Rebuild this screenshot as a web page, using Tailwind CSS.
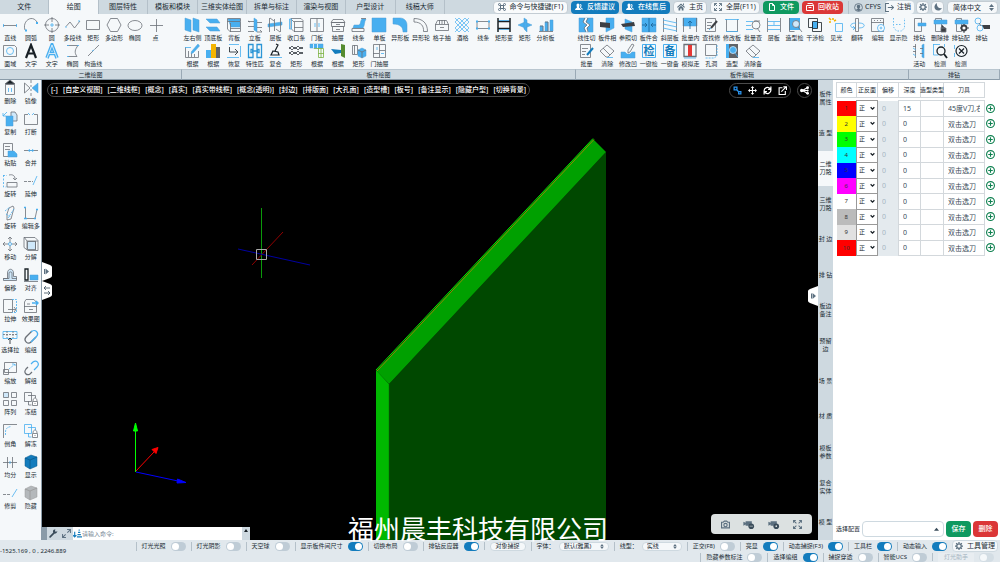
<!DOCTYPE html>
<html lang="zh-CN">
<head>
    <meta charset="UTF-8">
    <meta name="viewport" content="width=device-width, initial-scale=1.0">
    <title>板件绘图</title>
    <script src="https://cdn.jsdelivr.net/npm/@tailwindcss/browser@4"></script>
</head>
<body class="h-screen flex flex-col overflow-hidden bg-[#f5f8fa] font-['Noto_Sans','Noto_Sans_CJK_SC',sans-serif] text-[6px] leading-[8px] text-[#202b33]">

<!-- Tabs and top buttons -->
<header class="flex justify-between h-[14px] shrink-0 bg-[#ced9e0]">
    <nav id="tabs" class="grid grid-cols-9 w-[445px] text-[7px] leading-[14px]"></nav>
    <div class="flex items-center gap-[3px] pr-[2px] text-[7px] whitespace-nowrap">
        <button class="flex items-center justify-center gap-1 w-[75px] h-[13px] rounded-sm bg-[#f9fbfc] border border-[#c3ccd3]">
            <svg class="w-2 h-2 shrink-0" viewBox="0 0 16 16" fill="none" stroke="#5c7080" stroke-width="2"><path d="M5 5h6v6H5zM5 5H3.500A2 2 0 1 1 5 3zM11 5V3a2 2 0 1 1 2 2zM11 11h2a2 2 0 1 1-2 2zM5 11v2a2 2 0 1 1-2-2z"/></svg>
            命令与快捷键(F1)
        </button>
        <button class="flex items-center justify-center gap-1 w-12 h-[13px] rounded-sm bg-[#137cbd] text-white font-medium">
            <svg class="w-2 h-2 shrink-0" viewBox="0 0 16 16" fill="#fff"><path d="M6 1c2 0 3 1.500 3 3.500S8 8 8 9s4 1.500 4 5H0c0-3.500 4-4 4-5S3 6.500 3 4.500 4 1 6 1zM10 2c2 0 3 1 3 3s-1 3-1 4 4 1 4 4h-3c0-2.500-3-3.500-3-4.500s1-2 1-3.500-1-2-1-3z"/></svg>
            反馈建议
        </button>
        <button class="flex items-center justify-center gap-1 w-12 h-[13px] rounded-sm bg-[#137cbd] text-white font-medium">
            <svg class="w-2 h-2 shrink-0" viewBox="0 0 16 16" fill="#fff"><path d="M6 1c2 0 3 1.500 3 3.500S8 8 8 9s4 1.500 4 5H0c0-3.500 4-4 4-5S3 6.500 3 4.500 4 1 6 1zM10 2c2 0 3 1 3 3s-1 3-1 4 4 1 4 4h-3c0-2.500-3-3.500-3-4.500s1-2 1-3.500-1-2-1-3z"/></svg>
            在线售后
        </button>
        <button class="flex items-center justify-center gap-1 w-[34px] h-[13px] rounded-sm bg-[#f5f8fa] border border-[#c3ccd3]">
            <svg class="w-2 h-2 shrink-0" viewBox="0 0 16 16" fill="#5c7080"><path d="M8 1l8 7-1.500 1.500L8 4 1.500 9.500 0 8zM8 5.500L13 10v5h-3.500v-4h-3v4H3v-5zM12 1h2v4l-2-2z"/></svg>
            主页
        </button>
        <button class="flex items-center justify-center gap-1 w-[50px] h-[13px] rounded-sm bg-[#f5f8fa] border border-[#c3ccd3]">
            <svg class="w-2 h-2 shrink-0" viewBox="0 0 16 16" fill="none" stroke="#5c7080" stroke-width="1.800"><path d="M1 6V1h5M10 1h5v5M15 10v5h-5M6 15H1v-5M1 1l5 5M15 1l-5 5M15 15l-5-5M1 15l5-5"/></svg>
            全屏(F11)
        </button>
        <div class="flex gap-[3px]">
            <button class="flex items-center justify-center gap-1 w-[36px] h-[13px] rounded-sm bg-[#0f9960] text-white font-medium">
                <svg class="w-2 h-2 shrink-0" viewBox="0 0 16 16" fill="none" stroke="#fff" stroke-width="2"><path d="M3 1h6l4 4v10H3zM9 1v4h4"/></svg>
                文件
            </button>
            <button class="flex items-center justify-center gap-1 w-[41px] h-[13px] rounded-sm bg-[#db3737] text-white font-medium">
                <svg class="w-2 h-2 shrink-0" viewBox="0 0 16 16" fill="none" stroke="#fff" stroke-width="2"><path d="M1 5h14v10H1zM3 1h10l2 4M5 9h6"/></svg>
                回收站
            </button>
        </div>
        <div class="flex items-center gap-[2px] border-l border-[#b4c0c9] ml-[2px] pl-[5px]">
            <a href="#user" class="flex items-center gap-[2px] h-[13px] w-[29px]">
                <svg class="w-[9px] h-[9px] shrink-0" viewBox="0 0 16 16" fill="none" stroke="#5c7080" stroke-width="1.500"><circle cx="8" cy="8" r="7"/><path fill="#5c7080" stroke="none" d="M8 3c2 0 3 1.200 3 3S9.500 9 9.500 10s3 .8 3 2.500C11 14.500 5 14.500 3.500 12.500c0-1.700 3-1.500 3-2.500S5 8 5 6s1-3 3-3z"/></svg>
                CFYS
            </a>
            <button class="flex items-center gap-[3px] h-[13px] w-[29px] bg-[#f5f8fa] rounded-sm">
                <svg class="w-[9px] h-[9px]" viewBox="0 0 16 16" fill="none" stroke="#5c7080" stroke-width="1.800"><path d="M7 1H1v14h6M5 8h10M11 4l4 4-4 4"/></svg>
                注销
            </button>
            <button aria-label="设置" class="flex items-center justify-center w-[13px] h-[13px] rounded-sm bg-[#f5f8fa] border border-[#c3ccd3]">
                <svg class="w-2 h-2 shrink-0" viewBox="0 0 16 16" fill="none" stroke="#5c7080"><circle cx="8" cy="8" r="4.500" stroke-width="2.500"/><path stroke-width="2.500" d="M8 0v3M8 13v3M0 8h3M13 8h3M2.300 2.300l2 2M11.700 11.700l2 2M2.300 13.700l2-2M11.700 4.300l2-2"/></svg>
            </button>
            <button aria-label="深色模式" class="flex items-center justify-center w-[13px] h-[13px] rounded-sm bg-[#f5f8fa] border border-[#c3ccd3]">
                <svg class="w-2 h-2 shrink-0" viewBox="0 0 16 16" fill="#5c7080"><path d="M6 0C1 3-1 9 3 13s11 2 13-3C11 12 4 7 6 0z"/></svg>
            </button>
        </div>
        <label class="relative">
            <select aria-label="语言" class="appearance-none block w-[51px] h-[13px] pl-[5px] rounded-sm bg-[#f5f8fa] border border-[#c3ccd3] text-[7px] leading-[11px]"><option>简体中文</option></select>
            <svg class="absolute right-[4px] top-[3px] w-[5px] h-[7px]" viewBox="0 0 10 14" fill="#5c7080"><path d="M5 0l5 6H0zM5 14L0 8h10z"/></svg>
        </label>
    </div>
</header>

<!-- Ribbon -->
<section id="ribbon" class="flex shrink-0 h-[66px]"></section>

<main class="flex flex-1 min-h-0">
    <!-- Modify tools -->
    <aside class="w-[42px] shrink-0 border-r border-[#8a9ba8]">
        <div id="modify" class="grid grid-cols-2 auto-rows-fr h-[436px]"></div>
    </aside>

    <!-- Drawing area -->
    <section class="relative flex-1 min-w-0 bg-black">
        <svg class="block w-full h-full" viewBox="42 80 776 460" preserveAspectRatio="xMidYMax slice">
            <path fill="#004800" d="M389 384L606 152V540H389z"/>
            <path fill="#00a000" d="M376 371L593 139l13 13L389 384z"/>
            <path fill="#00b800" d="M376 370l13 14v156h-13z"/>
            <path stroke="#00e000" d="M376 370L593 138.500"/>
            <path stroke="#8c8c00" d="M377 371L594 139.500"/>
            <path stroke="#007000" d="M376 370l13 14v156" fill="none" stroke-width=".5"/>
            <!-- cursor -->
            <path stroke="#0a9a0a" d="M261.500 208v70"/>
            <path stroke="#900000" d="M252 265l31-33"/>
            <path stroke="#0000a0" d="M238 249l72 16"/>
            <path stroke="#aaa" fill="none" d="M256.500 249.500h10v10h-10z"/>
            <!-- axes -->
            <path stroke="#0f0" fill="#0f0" d="M135.500 472v-42M135.500 423l-2 8h4z"/>
            <path stroke="red" fill="red" d="M136 471l18-19M158 447.500l-6 2 4 4z"/>
            <path stroke="#00f" fill="#00f" d="M136 472l42 9M186 482.500l-8.500-3.500-.5 4z"/>
        </svg>

        <div id="views" class="absolute left-[5px] top-[3px] flex justify-between items-center w-[483px] h-[14px] px-[3px] rounded-full border border-[#4a4a4a] text-[7px] font-medium text-white whitespace-nowrap"></div>

        <div class="absolute right-[27px] top-[3px] flex justify-around items-center w-[62px] h-[15px] rounded-full border border-[#4a4a4a]">
            <button aria-label="选择"><svg class="w-[9px] h-[9px]" viewBox="0 0 16 16" fill="none" stroke="#2b95f0" stroke-width="2.200"><path d="M2 2h5v5H2zM7 7l4 4M10 10h4v4h-4z"/></svg></button>
            <button aria-label="平移"><svg class="w-[9px] h-[9px]" viewBox="0 0 16 16" fill="#fff"><path d="M8 0l3 3.500H9V7h3.500V5L16 8l-3.500 3V9H9v3.500h2L8 16l-3-3.500h2V9H3.500v2L0 8l3.500-3v2H7V3.500H5z"/></svg></button>
            <button aria-label="旋转"><svg class="w-[9px] h-[9px]" viewBox="0 0 16 16" fill="none" stroke="#fff" stroke-width="2.200"><path d="M2 9c-.5-6 7-9 11-4M14 7c.5 6-7 9-11 4M14 1v5H9M2 15v-5h5"/></svg></button>
            <button aria-label="弹出"><svg class="w-[9px] h-[9px]" viewBox="0 0 16 16" fill="none" stroke="#fff" stroke-width="2"><path d="M8 3H2v12h11V9M6 10l8-8M9.500 1.500H15V7"/></svg></button>
        </div>
        <button aria-label="分享" class="absolute right-[6px] top-[3px] flex justify-center items-center w-[15px] h-[15px] rounded-full border border-[#4a4a4a]">
            <svg class="w-[9px] h-[9px]" viewBox="0 0 16 16" fill="#fff"><path stroke="#fff" stroke-width="2" fill="none" d="M13 3L4 8l9 5M4 8h9"/><circle cx="3" cy="8" r="3"/><circle cx="13.500" cy="3" r="2.500"/><circle cx="13.500" cy="8" r="2"/><circle cx="13.500" cy="13" r="2.500"/></svg>
        </button>

        <!-- Side handles -->
        <div class="absolute left-0 top-[182px]">
            <button aria-label="展开" class="block w-[10px] h-[19px]"><svg class="w-full h-full" viewBox="0 0 10 19"><path fill="#fff" d="M0 0l8 3q2 1 2 2v9q0 1-2 2l-8 3z"/><path fill="#5c7080" d="M2 7h1v5H2zM3.500 6.500L7 9.500l-3.500 3z"/></svg></button>
            <button aria-label="切换" class="block w-[10px] h-[19px]"><svg class="w-full h-full" viewBox="0 0 10 19"><path fill="#fff" d="M0 0l8 3q2 1 2 2v9q0 1-2 2l-8 3z"/><path fill="none" stroke="#394b59" stroke-width=".8" d="M2 7h6M4 5L2 7l2 2M2 12h6M6 10l2 2-2 2"/></svg></button>
        </div>
        <button aria-label="收起" class="absolute right-0 top-[206px] w-[10px] h-[20px]"><svg class="w-full h-full" viewBox="0 0 10 20"><path fill="#fff" d="M10 0L2 3Q0 4 0 5v10q0 1 2 2l8 3z"/><path fill="#5c7080" d="M3 7.500h1v5H3zM4.500 7L8 10l-3.500 3z"/></svg></button>

        <!-- Command line -->
        <div class="absolute left-0 bottom-0 flex w-[208px] h-[13px] bg-white">
            <div class="w-[5px] bg-[#8a9ba8]"></div>
            <div class="flex justify-around items-center w-[26px] bg-[#ced9e0]">
                <button aria-label="命令设置"><svg class="w-[9px] h-[9px]" viewBox="0 0 16 16"><path d="M2 14l7-7" stroke="#394b59" stroke-width="3" stroke-linecap="round"/><path fill="#394b59" d="M15 4l-3 1-1.500-1.500L11.500 1C8 0 6 3 7.500 6s6 3 7.500-2z"/></svg></button>
                <button aria-label="放大"><svg class="w-[9px] h-[9px]" viewBox="0 0 16 16" fill="none" stroke="#5c7080" stroke-width="1.800"><path d="M9 1h6v6M15 1L9.500 6.500M7 15H1V9M1 15l5.500-5.500"/></svg></button>
            </div>
            <svg class="w-[9px] h-[9px] mt-[2px]" viewBox="0 0 16 16" fill="none" stroke="#137cbd" stroke-width="2"><path d="M3 5v9M0 11l3 3 3-3M10 2h2M9 6h4M8 10h6M7 14h9"/></svg>
            <input type="text" aria-label="命令" placeholder="请输入命令:" class="flex-1 min-w-0 text-[6px] placeholder:text-[#738694] outline-none">
            <div class="w-2 bg-[#ced9e0]"><svg class="w-2 h-2" viewBox="0 0 8 8" fill="#182026"><path d="M4 2l2 3H2z"/></svg></div>
        </div>

        <p class="absolute left-[306px] bottom-[-2px] z-10 text-[26px] leading-[26px] text-white whitespace-nowrap">福州晨丰科技有限公司</p>

        <div class="absolute right-[6px] bottom-[6px] flex justify-around items-center w-[101px] h-5 px-[3px] rounded-sm bg-[#dce1e1]">
            <button aria-label="截图"><svg class="w-[9px] h-[9px]" viewBox="0 0 16 16" fill="none" stroke="#5c7080" stroke-width="2"><path d="M1 4h3l2-2h4l2 2h3v10H1z"/><circle cx="8" cy="9" r="3"/></svg></button>
            <button aria-label="录像"><svg class="w-3 h-[9px]" viewBox="0 0 20 16" fill="#5c7080"><path d="M0 3l4 2V2h11v8H4V8l-4 2z"/><circle cx="14" cy="11" r="5" fill="#394b59"/><path stroke="#dce1e1" d="M11 11h6"/></svg></button>
            <button aria-label="录像设置"><svg class="w-3 h-[9px]" viewBox="0 0 20 16" fill="#5c7080"><path d="M0 3l4 2V2h11v8H4V8l-4 2z"/><circle cx="14" cy="11" r="5" fill="#394b59"/><circle cx="14" cy="11" r="1.500" fill="#dce1e1"/></svg></button>
            <button aria-label="全屏视图"><svg class="w-[9px] h-[9px]" viewBox="0 0 16 16" fill="none" stroke="#5c7080" stroke-width="1.800"><path d="M1 5V1h4M11 1h4v4M15 11v4h-4M5 15H1v-4M1 1l5 5M15 1l-5 5M15 15l-5-5M1 15l5-5"/></svg></button>
        </div>
    </section>

    <nav id="sideTabs" class="flex flex-col w-[15px] shrink-0 bg-[#ced9e0]"></nav>

    <!-- Tool path panel -->
    <section class="flex flex-col justify-between w-[167px] shrink-0 pl-[3px] pt-[2px] pb-[3px] pr-[2px] bg-white">
        <table class="w-[158px] h-[174px] table-fixed border-collapse">
            <thead>
            <tr class="h-[15px]">
                <th class="w-5 border border-[#d3d8dc] font-normal">颜色</th>
                <th class="w-[21px] border border-[#d3d8dc] font-normal whitespace-nowrap">正反面</th>
                <th class="w-[21px] border border-[#d3d8dc] font-normal">偏移</th>
                <th class="w-[22px] border border-[#d3d8dc] font-normal">深度</th>
                <th class="w-[23px] border border-[#d3d8dc] font-normal whitespace-nowrap"><span class="flex justify-center">造型类型</span></th>
                <th class="w-[41px] border border-[#d3d8dc] font-normal">刀具</th>
                <td></td>
            </tr>
            <tr class="h-[3px]"><td colspan="7"></td></tr>
            </thead>
            <tbody id="paths"></tbody>
        </table>
        <div class="flex items-center gap-[2px] h-4">
            <label for="config" class="w-6 whitespace-nowrap">选择配置</label>
            <div class="relative flex-1">
                <select id="config" class="appearance-none block w-full h-4 rounded-sm border border-[#ced9e0] bg-white"><option></option></select>
                <svg class="absolute right-[5px] top-[6px] w-[5px] h-[5px]" viewBox="0 0 8 8" fill="#394b59"><path d="M4 1l4 5H0z"/></svg>
            </div>
            <button class="w-[25px] h-4 rounded-sm bg-[#0f9960] text-white text-[7px] font-medium">保存</button>
            <button class="w-[25px] h-4 rounded-sm bg-[#db3737] text-white text-[7px] font-medium">删除</button>
        </div>
    </section>
</main>

<!-- Status bar -->
<footer class="flex justify-between items-center h-[22px] shrink-0 bg-[#e1e8ed] pr-[2px] whitespace-nowrap">
    <span class="text-[6px]">-1525.169 , 0 , 2246.889</span>
    <div class="flex flex-col items-end">
        <div class="flex items-center gap-[5px] h-[12px]">
            <div id="statusA" class="contents"></div>
            <button class="w-9 h-[9px] rounded-sm bg-[#f5f8fa] border border-[#ced9e0] leading-[7px]">对象捕捉</button>
            <div class="flex items-center gap-1 border-l border-[#b4c0c9] pl-[5px]">
                <label for="font">字体：</label>
                <div class="relative">
                    <select id="font" class="appearance-none block w-[50px] h-[9px] pl-1 rounded-sm bg-[#f5f8fa] border border-[#ced9e0] leading-[7px]"><option>默认(雅黑)</option></select>
                    <svg class="absolute right-[5px] top-[2px] w-1 h-[5px]" viewBox="0 0 10 14" fill="#5c7080"><path d="M5 0l5 6H0zM5 14L0 8h10z"/></svg>
                </div>
            </div>
            <div class="flex items-center gap-1 border-l border-[#b4c0c9] pl-[5px]">
                <label for="lineType">线型：</label>
                <div class="relative">
                    <select id="lineType" class="appearance-none block w-10 h-[9px] pl-1 rounded-sm bg-[#f5f8fa] border border-[#ced9e0] leading-[7px]"><option>实线</option></select>
                    <svg class="absolute right-[5px] top-[2px] w-1 h-[5px]" viewBox="0 0 10 14" fill="#5c7080"><path d="M5 0l5 6H0zM5 14L0 8h10z"/></svg>
                </div>
            </div>
            <div id="statusB" class="contents"></div>
            <button class="flex items-center justify-center gap-1 w-[46px] h-[12px] rounded-sm bg-[#f5f8fa] border border-[#ced9e0] text-[7px]">
                <svg class="w-2 h-2 shrink-0" viewBox="0 0 16 16" fill="none" stroke="#5c7080"><circle cx="8" cy="8" r="4.500" stroke-width="2.500"/><path stroke-width="2.500" d="M8 0v3M8 13v3M0 8h3M13 8h3M2.300 2.300l2 2M11.700 11.700l2 2M2.300 13.700l2-2M11.700 4.300l2-2"/></svg>
                工具管理
            </button>
        </div>
        <div class="flex items-center gap-[5px] h-[10px] pr-[4px]">
            <div id="statusC" class="contents"></div>
            <label for="lightHelper" class="w-9 h-[9px] text-center bg-[#e8edf1] text-[#a7b6c2]">灯光助手</label>
            <input type="checkbox" id="lightHelper" disabled class="appearance-none w-[15px] h-[9px] rounded-full bg-[#d3dde4] before:content-[''] before:block before:w-[7px] before:h-[7px] before:m-px before:rounded-full before:bg-[#f5f8fa]">
        </div>
    </div>
</footer>

<script>
    // stroke / fill shorthands used in the icon set, drawn on a 16x16 grid
    const B = 'stroke="#48aff0"';
    const F = 'fill="#48aff0" stroke="#4f9fd4" stroke-width=".5"';
    const K = 'stroke="#182026"';
    const L = 'fill="#cfe8fa"';
    const G = 'fill="#5f6368" stroke="none"';

    const icons = {
        line: `<path d="M1 8.500h14"/><path ${B} d="M1.500 7v3M14.500 7v3"/>`,
        arc: `<path d="M2 13C-1 4 9-3 14 5"/><path ${B} stroke-width="2" d="M2 13.500h2M14 5v2"/>`,
        circle: `<circle cx="8" cy="8" r="6.500"/><path d="M8 0v5M8 11v5M0 8h5M11 8h5"/><path ${B} d="M8 6v4M6 8h4"/>`,
        pline: `<path d="M1 9.500L5 5l4.500 6L15 4"/><path ${B} d="M1 9v2M14 3v2"/>`,
        rect: `<path d="M1.500 3.500h13v9h-13z"/>`,
        polygon: `<path d="M4.500 1.500h7l3.500 6.500-3.500 6.500h-7L1 8z"/>`,
        ellipse: `<ellipse cx="8" cy="8.500" rx="7" ry="5"/>`,
        point: `<path d="M8.500 2v13M2 8.500h13"/>`,
        region: `<path d="M1.500 2.500h11l2 2v9h-13z"/><circle ${B} cx="8" cy="8" r="3.500"/>`,
        text: `<path stroke="#182026" stroke-width="2.200" d="M3 15L8 2l5 13M5 10.500h6"/>`,
        mtext: `<path ${B} stroke-width="3.500" d="M3 15L8 2l5 13M5 10.500h6"/><path stroke="#f5f8fa" d="M3 15L8 2l5 13M5 10.500h6"/>`,
        spline: `<path d="M2 2.500h11c-3 4-4 7-1 11H3"/><path ${B} d="M2 2.500h2M2 13.500h2M12 2.500h2"/>`,
        xline: `<path stroke-dasharray="8 1" d="M3 13L14 2"/><path ${B} d="M7 8l2-1"/>`,
        sides: `<path ${F} d="M1 1l6 2v12l-6-2zM9 1l6 2v12l-6-2z"/>`,
        topbot: `<path ${F} d="M1 2h11l3 4H5zM1 10h11l3 4H5z"/>`,
        back: `<path ${F} d="M2 2h12v8H5z"/><path d="M1.500 1.500h13v3h-13zM1.500 4v8l3 3V6M4 14.500h10.500V5M4 11.500h10"/>`,
        vert: `<path ${F} d="M7 1l3 2v12l-3-2z"/><path d="M1 4.500h6M10 5.500h5M1 9.500h6M10 10.500h5M1 14.500h6M1 4l2 1M10 15h5l-2-2"/>`,
        shelf: `<path ${F} d="M1 7l14-2v3L1 10z"/><path d="M2.500 1v14M7.500 2v12M13.500 1v14M3 1l4 3M9 12l4 3"/>`,
        filler: `<path d="M3 1.500h10l2 2v11H6l-3-3zM6 4.500h9M6.500 5v10M3 2l3 3M6 10.500h9"/><path ${B} d="M1.500 2h2v10h-2z"/>`,
        door: `<path d="M1.500 1.500h13v13h-13zM8 1.500v13"/><path ${B} d="M6 6v4M10 6v4"/>`,
        drawer: `<path d="M3 2.500h10l2 3H1zM1.500 5.500h13v4h-13zM2.500 9.500h11v5h-11zM6 7.500h4M6 12.500h4"/>`,
        strip: `<path ${F} d="M11 2h4c-2 3-1 6-3 9H2l1-3h5c2-1 1-4 3-6z"/><path d="M1 11.500h12v3H1zM10 1.500h5"/>`,
        board: `<path ${F} d="M1 1h14v14H1z"/>`,
        shaped: `<path ${F} d="M1 1h7c4 0 7 3 7 7v7h-4c0-5-3-8-10-8z"/>`,
        outline: `<path d="M1 1.500c9 0 13.500 5 13.500 13h-4C11 9 8 5 1 5z"/>`,
        grid: `<path d="M1.500 7.500l2-4h9l2 4v6h-13zM1 7.500h14M5.500 3v4M8 3v4M10.500 3v4M6 10.500h4"/>`,
        wine: `<path ${B} stroke-width=".7" d="M1 5l4-4 10 10-4 4L1 5M1 11L11 1l4 4L5 15l-4-4M1 1l14 14M15 1L1 15"/>`,
        strip2: `<path d="M2 4.500h12v7H2z"/><path ${B} stroke-width="2" d="M1 4.500h2M13 4.500h2M1 11.500h2M13 11.500h2"/>`,
        rectvar: `<path ${K} stroke-width="1.500" d="M2 1v14M14 1v14M2 4.500h12M2 11.500h12"/><path ${B} d="M3 3.500h10M3 12.500h10"/>`,
        cross3d: `<path ${F} d="M7 1l3 2v12l-3-3zM1 8l7-3 7 3-7 3z"/>`,
        chart: `<path ${F} d="M2 9h3v5H2zM7 5h3v9H7zM12 3h3v11h-3z"/><path d="M1 14.500h14M2 9h3v5M7 5h3v9"/>`,
        edit: `<path d="M1.500 4v10.500h13V8M4.500 8v6M7.500 10v4M10.500 11v3"/><path ${F} d="M14 1l1.500 2L9 10l-2 .5.500-2z"/><path ${B} d="M1 4.500h6"/>`,
        books: `<path fill="#48aff0" stroke="none" d="M1 7h5v8H1z"/><path fill="#f4b400" stroke="none" d="M6 1h5v14H6z"/><path ${G} d="M11 4h4v11h-4z"/>`,
        restore: `<path ${B} d="M3 1.500h10M1 14.500h12M14.500 3v11"/><path ${K} d="M3.500 4v5H11M9 6l3 3-3 3"/>`,
        match: `<path stroke="#2b95d6" stroke-width="1.300" d="M1.500 1.500H6v5H4v3h2v5H1.500zM14.500 1.500H10v5h2v3h-2v5h4.500zM5 8h6"/>`,
        clamp: `<path ${K} stroke-width="1.200" d="M9 1l2 1-3 6M6 8l5 1 1 3H4z"/><path ${B} d="M2 14.500h13"/>`,
        mesh: `<path ${K} stroke-width=".7" d="M1 6l3-3 3 3 3-3 3 3 2-2M1 4l3 3 3-3 3 3 3-3 2 2M1 11l3-3 3 3 3-3 3 3 2-2M1 9l3 3 3-3 3 3 3-3 2 2"/>`,
        cabin: `<path ${F} d="M1 1h13v4H1z"/><path stroke="#fff" d="M4.500 1v4M8.500 1v4"/><path stroke="#7cb342" d="M5 5.500h9.500v9h-5V5M9 10.500h6M12 5v10"/>`,
        cabin2: `<path fill="#558b2f" stroke="none" d="M11 1l4 1v13l-4-2z"/><path fill="#137cbd" stroke="none" d="M1 6l10 1v3l-6 1z"/>`,
        box: `<path d="M1.500 2.500h5v9h-5zM3.500 2v9"/><path ${F} d="M7 7l4-2 4 2v6l-4 2-4-2z"/><path d="M7 7l4 2 4-2M11 9v6"/>`,
        doordr: `<path d="M2.500 1.500h12v13h-12zM8.500 1.500v13M8 7.500h6M2 10.500h6"/><path ${B} d="M6 4v3M10 10.500h3"/>`,
        cut: `<path ${F} d="M1 1h14v14H1z"/><path stroke="#fff" stroke-width="2" d="M8.500 1l-2 4 4 3-3 3 2 4"/><path d="M7 1L5 5l4 3-3 3 2 4M10 1L8 5l4 3-3 3 1 4"/>`,
        cutA: `<path ${F} d="M7 1h8v10l-8 4z"/><path fill="#3c3f44" stroke="none" d="M1 5l10 1v5L1 10z"/>`,
        cutB: `<path ${F} d="M5 2l7 3v10l-7-3z"/><path fill="#3c3f44" stroke="none" d="M1 7l13-2 1 4-12 1z"/>`,
        merge: `<path ${F} d="M1 1h14v14H1z"/><path stroke="#1a5f92" d="M8 1v14M1 8h5M15 8h-5M4 6l2 2-2 2M12 6l-2 2 2 2"/>`,
        slope: `<path d="M1.500 1v14M14.500 1v14"/><path ${B} d="M1 3l14 3M1 7l14 3M1 11l14 3"/>`,
        batch: `<path ${F} d="M1 1h14v8H1z"/><path d="M1.500 1v14M14.500 1v14"/><path stroke="#1a5f92" d="M8 12V4M6 6l2-2 2 2"/>`,
        find: `<path d="M2.500 1.500h10v13h-10zM4 5.500h5M4 8.500h4M4 11.500h3"/><path stroke="#3c3f44" stroke-width="2" d="M14 4l-6 7"/><path ${B} d="M6 13l2-2"/>`,
        modify: `<path d="M2.500 2v12.500h11V2"/><path ${B} d="M1 2.500h14M2 14.500h12"/>`,
        query: `<path ${B} d="M1 4.500h7M1 8.500h5M1 12.500h7"/><circle cx="11" cy="8" r="4"/><path d="M12 11l3 4M9 4h6"/>`,
        layer: `<path d="M1.500 1v14M14.500 1v14"/><path ${B} d="M2 4.500h12M2 8.500h12M2 12.500h12M8 5v3"/>`,
        inspect: `<path fill="#48aff0" stroke="none" d="M2 1h11v12H2z"/><path d="M2.500 1v13.500h5"/><circle fill="#cfe8fa" cx="9" cy="7" r="3.500"/><path d="M11 10l4 5"/>`,
        clash: `<path ${K} d="M1.500 1.500h9v9h-9zM5.500 5.500h9v9h-9z"/><path fill="#48aff0" ${K} d="M5.500 4.500h5v7h-5z"/>`,
        light: `<path ${B} d="M7.500 6.500h7v8h-7z"/><path stroke="#f4b400" stroke-width="1.600" d="M1 1l2 2M5 1v2M1 5h2M8 3L6 4"/>`,
        flip: `<path d="M6.500 1.500h3v13h-3z"/><path ${B} d="M7 6C0 6 0 11 6 11M10 6c7 0 7 5 0 5M4 9l2 2-2 2"/>`,
        code: `<path d="M1.500 1.500h12v13h-12zM1 5.500h13M4 3.500h1M7 3.500h1M10 3.500h1"/><circle ${B} fill="#fff" cx="11" cy="11" r="3.500"/><circle ${B} cx="11" cy="11" r="1"/>`,
        hide: `<path ${B} stroke-dasharray="1.500 1.500" d="M2.500 1v9l3 4h5l3-3V1M5 7.500h6"/>`,
        note: `<path d="M2.500 1.500h10v13h-10zM4 5.500h6M4 8.500h4M4 11.500h3"/><path stroke="#137cbd" stroke-width="2" d="M15 5l-6 7"/>`,
        eraser: `<path d="M8 2l7 6-6 6H7L1 8zM4 5l7 7"/><path ${B} d="M8 14.500h6"/>`,
        groove: `<path ${F} d="M1 9h4l2 2h3l2-2h3v6H1z"/><path d="M12 1l2 1-4 7-2 1V7z"/>`,
        check: `<path ${B} stroke-width="1" d="M1.500 1.500h13v13h-13z"/><text x="8" y="12" font-size="11" font-weight="700" text-anchor="middle" fill="#137cbd" stroke="none">检</text>`,
        backup: `<path ${B} stroke-width="1" d="M1.500 1.500h13v13h-13z"/><text x="8" y="12" font-size="11" font-weight="700" text-anchor="middle" fill="#137cbd" stroke="none">备</text>`,
        simulate: `<path stroke-width="1.300" d="M2 1.500h12v12H2z"/><path fill="#e53935" stroke="none" d="M6 2h4v11H6z"/><path ${B} d="M2 15h12"/>`,
        hole: `<path d="M2.500 1.500h11v11h-11z"/><path ${B} stroke-dasharray="2 1" d="M14 2v11l-3 2H2"/>`,
        model: `<path ${G} d="M2 1h12v14H2z"/><path fill="#48aff0" stroke="none" d="M2 1h3v14H2z"/><circle fill="#48aff0" stroke="#cfe8fa" cx="9" cy="7" r="3.500"/><path ${B} d="M11 10l3 4"/>`,
        drill: `<path d="M3.500 1.500h7v13h-7z"/><path ${F} d="M7 6h8v3H7z"/>`,
        drilldel: `<path d="M3.500 1.500h6v13h-6z"/><path ${F} d="M2 3h13v4H2z"/><path fill="#3c3f44" d="M10 8l3 3H9zM9 11h5v4H9z"/>`,
        drillcfg: `<path d="M3.500 1.500h5v13h-5z"/><path ${F} d="M2 3h13v4H2z"/><circle fill="#fff" stroke="#3c3f44" stroke-width="1.800" cx="11" cy="11" r="2.500"/><path ${K} d="M11 7v1M11 14v2M7 11h1M14 11h2"/>`,
        drillrow: `<circle ${B} cx="4" cy="4" r="3"/><circle ${B} cx="6" cy="11" r="3"/><path fill="#3c3f44" stroke="none" d="M8 8h8v4h-6z"/><path d="M5 6l2 3"/>`,
        hinge: `<path d="M4.500 1v14M2 3.500h3M2 8.500h3"/><path ${B} d="M2 5l3 2M2 11l3 2"/><path ${F} d="M11 2l2-1v14l-2-1z"/><path d="M9 5.500h3M9 10.500h3"/>`,
        detect: `<path ${B} d="M1 1.500h7M1.500 1v11h5M12.500 1v3"/><circle ${K} stroke-width="1.300" cx="9" cy="8" r="4"/><path ${K} stroke-width="1.800" d="M12 11l3 4"/>`,
        detectx: `<circle ${K} stroke-width="1.200" cx="8.500" cy="8" r="5.500"/><path ${K} stroke-width="1.200" d="M6 5.500l5 5M11 5.500l-5 5"/><path ${B} d="M1.500 2v4M1.500 10v4"/>`,
        trash: `<path fill="#182026" d="M8 0l5 4H3z"/><path d="M3.500 4.500v10h9v-10z"/><path ${B} d="M6.500 8v4M9.500 8v4"/>`,
        mirror: `<path d="M1.500 3v10L7 8zM8 0v3M8 5v2M8 9v2M8 13v3"/><path ${F} d="M15 3v10L9 8z"/>`,
        copy: `<path ${L} d="M9 1h4l2 3v6H9z"/><path ${F} d="M4 5h7v10H4z"/><path ${B} d="M1 5l4-4M1 2v3h3"/>`,
        brk: `<path d="M5 3.500H1.500v10h13v-10H11"/><path ${B} d="M5 2l2 2M11 2L9 4"/>`,
        paste: `<path d="M1.500 1.500h9v13h-9zM3 4.500h5M3 7.500h5"/><path ${F} d="M6 9h6l3 3v3H6z"/>`,
        join: `<path d="M1 8.500h14"/><path ${B} d="M5 8.500h6M6 7l1 1.500L6 10M10 7L9 8.500l1 1.500"/>`,
        rotate: `<path d="M5 9.500h10v4.500H5zM7 2c4-1 6 1 6 4M11 5l2 2 2-2"/><path ${B} stroke-dasharray="2 1.500" d="M1.500 2v12h3M1 2.500h4"/>`,
        extend: `<path stroke-dasharray="3 1" d="M1 8.500h9"/><path ${B} d="M10 12l4-9"/>`,
        rotate3: `<path d="M7 3l4-2 1 2-3 11-4 1V9z"/><path ${B} stroke-dasharray="2 1" d="M3 6l5-4M6 13l6-9M4 9l5 3"/>`,
        editpl: `<path d="M2.500 2v11.500H12l2-9"/><path ${B} stroke-width="1.500" d="M1 2.500h2M1 13.500h3M11 13.500h2M13 4.500h2"/>`,
        move: `<path d="M8 1v14M1 8h14M6 3l2-2 2 2M6 13l2 2 2-2M3 6L1 8l2 2M13 6l2 2-2 2"/><circle fill="#f5f8fa" ${B} cx="8" cy="8" r="1.500"/>`,
        explode: `<path ${L} d="M4.500 5.500h8v8h-8z"/><path d="M1 1.500h11l3 3v10H5l-4-3zM1 1l3 4v9M4 5h11M12.500 5v9"/>`,
        offset: `<path ${L} d="M1.500 11.500h4V6c0-5 6-5 6 0v3.500h3v4h-13z"/><path d="M1 11.500h6V6c0-1.500 3-1.500 3 0v5.500h5"/>`,
        align: `<path ${K} stroke-width="1.300" d="M2 2h3v11H2z"/><path ${F} d="M7 8h8v5H7z"/><path d="M1 14.500h14"/>`,
        stretch: `<path d="M1.500 1.500h9v13h-9zM6 11.500h8M12 9l2 2.500-2 2.500"/><path ${B} stroke-dasharray="2 1" d="M10 1.500h4.500v13H10"/>`,
        render: `<path d="M3 1.500h8l2.500 3v10h-12V4zM1 8.500h13M4 6h3M6 11.500h4"/><path ${B} stroke-width="1.500" d="M9 5h6M13 3l2 2-2 2"/>`,
        selstretch: `<path ${B} d="M1 2.500h14v7H1z"/><path stroke-dasharray="2 1" d="M1 5.500h14M5 2v7M11 2v7"/><path ${K} d="M8 15V9M6 11l2-2 2 2"/>`,
        group: `<path stroke-width="1.300" d="M9 2l-6 6c-3 4 2 8 5 5l5-5"/><path ${B} stroke-width="1.300" d="M8 3c4-4 9 1 5 5l-5 5"/>`,
        scale: `<path d="M2.500 2.500h12v10h-12zM1.500 9.500h5v5h-5z"/><path ${B} stroke-dasharray="2 1" d="M7 9l6-5M10 4h3v3"/>`,
        ungroup: `<path stroke-width="1.200" d="M5 7l-2 2c-3 4 1 7 4 5l2-2"/><path ${B} stroke-width="1.200" d="M8 4l2-2c4-3 7 2 4 5l-3 3"/>`,
        array: `<path ${L} d="M1.500 1.500h5v5h-5z"/><path d="M9.500 1.500h5v5h-5zM1.500 9.500h5v5h-5zM9.500 9.500h5v5h-5z"/>`,
        freeze: `<path d="M1.500 1.500h7v9h-7zM5 4.500h7.500v4M5.500 10v4h3"/><path fill="#fff" d="M9.500 10.500h5v4h-5zM10 10c0-4 4-4 4 0M12 12v1"/>`,
        unfreeze: `<path ${B} d="M1.500 1.500h7v9h-7zM5 4.500h7.500v4M5.500 10v4h3"/><path fill="#fff" d="M9.500 10.500h5v4h-5zM10 10c0-4 4-4 4 0M12 12v1"/>`,
        fillet: `<path d="M1.500 15V1.500H15"/><path ${B} stroke-dasharray="2 1" d="M3.500 12V9q0-5 6-5.500"/>`,
        divide: `<path d="M1 8.500h14M5.500 3v11M10.500 3v11"/><path ${B} d="M8 7v3"/>`,
        show: `<path fill="#137cbd" stroke="#0e5a8a" stroke-width=".5" d="M2 4l6-3 6 2v9l-7 3-5-3z"/><path stroke="#0e5a8a" d="M2 4l5 2 7-3M7 6v9"/>`,
        trim: `<path stroke-dasharray="3 1" d="M1 9.500h8"/><path ${B} d="M10 12l5-8"/>`,
        hidebox: `<path fill="#b4b8bb" stroke="#999" stroke-width=".5" d="M2 4l6-3 6 2v9l-7 3-5-3z"/><path stroke="#999" d="M2 4l5 2 7-3M7 6v9"/>`
    };

    function tool(item) {
        const [label, icon] = item.split(':');
        return `<button class="flex flex-col items-center gap-px min-w-0 whitespace-nowrap">
            <svg class="w-4 h-4 shrink-0" viewBox="0 0 16 16" fill="none" stroke="#6b7077" stroke-width=".8">${icons[icon]}</svg>
            <span>${label}</span></button>`;
    }

    // Tabs
    const tabs = ['文件', '绘图', '图层特性', '模板和模块', '三维实体绘图', '拆单与标注', '渲染与视图', '户型设计', '线稿大师'];
    document.getElementById('tabs').innerHTML = tabs.map((t, i) =>
        `<button class="border-r border-[#b4c0c9] whitespace-nowrap ${i === 1 ? 'bg-[#f5f8fa]' : ''}">${t}</button>`).join('');

    // Ribbon groups
    const groups = [
        {
            name: '二维绘图', box: 'basis-[182px]', grid: 'w-[166px] grid-cols-8',
            rows: [
                '直线:line 圆弧:arc 圆:circle 多段线:pline 矩形:rect 多边形:polygon 椭圆:ellipse 点:point',
                '面域:region 文字:text 文字:mtext 椭圆:spline 构造线:xline'
            ]
        },
        {
            name: '板件绘图', box: 'basis-[394px]', grid: 'w-[374px] grid-cols-18',
            rows: [
                '左右侧:sides 顶底板:topbot 背板:back 立板:vert 层板:shelf 收口条:filler 门板:door 抽屉:drawer 线条:strip 单板:board 异形板:shaped 异形轮:outline 格子抽:grid 酒格:wine 线条:strip2 矩形变:rectvar 矩形:cross3d 分析板:chart',
                '根据:edit 根据:books 恢复:restore 特性匹:match 复合:clamp 矩形:mesh 根据:cabin 根据:cabin2 矩形:box 门抽屉:doordr'
            ]
        },
        {
            name: '板件编辑', box: 'basis-[333px]', grid: 'w-[333px] grid-cols-16',
            rows: [
                '线性切:cut 板件相:cutA 参照切:cutB 板件合:merge 斜层板:slope 批量内:batch 查找修:find 修改板:modify 批量查:query 层板:layer 造型检:inspect 干涉检:clash 见光:light 翻转:flip 编辑:code 显示隐:hide',
                '批量:note 清除:eraser 修改凹:groove 一键检:check 一键备:backup 模拟走:simulate 孔洞:hole 造型:model 清除备:eraser'
            ]
        },
        {
            name: '排钻', box: 'basis-[91px]', grid: 'w-[83px] grid-cols-4',
            rows: [
                '排钻:drill 删除排:drilldel 排钻配:drillcfg 排钻:drillrow',
                '活动:hinge 检测:detect 检测:detectx'
            ]
        }
    ];
    document.getElementById('ribbon').innerHTML = groups.map(g => `
        <div class="flex flex-col justify-between grow ${g.box}">
            <div class="flex flex-col gap-px pt-[3px]">
                ${g.rows.map(r => `<div class="grid ${g.grid}">${r.split(' ').map(tool).join('')}</div>`).join('')}
            </div>
            <h2 class="h-[11px] leading-[10px] text-center bg-[#ced9e0] border-r border-t border-b border-r-[#9aa9b5] border-t-[#b9c6cf] border-b-[#8a9ba8]">${g.name}</h2>
        </div>`).join('');

    // Modify tools
    document.getElementById('modify').innerHTML = ('删除:trash 镜像:mirror 复制:copy 打断:brk 粘贴:paste 合并:join 旋转:rotate 延伸:extend ' +
        '旋转:rotate3 编辑多:editpl 移动:move 分解:explode 偏移:offset 对齐:align 拉伸:stretch 效果图:render 选择拉:selstretch 编组:group ' +
        '缩放:scale 解组:ungroup 阵列:array 冻结:freeze 倒角:fillet 解冻:unfreeze 均分:divide 显示:show 修剪:trim 隐藏:hidebox').split(' ').map(tool).join('');

    // View settings
    const views = ['-', '自定义视图', '二维线框', '概念', '真实', '真实带线框', '概念(透明)', '封边', '排版面', '大孔面', '造型槽', '板号', '备注显示', '隐藏户型', '切换背景'];
    document.getElementById('views').innerHTML = views.map(v => `<button>[${v}]</button>`).join('');

    // Panel tabs
    const sideTabs = ['板件<br>属性', '造 型', '二维<br>刀路', '三维<br>刀路', '封 边', '排 钻', '板边<br>备注', '预留<br>边', '场 景', '材 质', '模板<br>参数', '复合<br>实体', '模 型'];
    document.getElementById('sideTabs').innerHTML = sideTabs.map((t, i) =>
        `<button class="flex-1 whitespace-nowrap ${i === 2 ? 'bg-[#f5f8fa]' : ''}">${t}</button>`).join('');

    // Tool paths
    const colors = ['#ff0000', '#ffff00', '#00ff00', '#00ffff', '#0000ff', '#ff00ff', '#ffffff', '#bbbbbb', '#e1e1e1', '#ff0000'];
    document.getElementById('paths').innerHTML = colors.map((c, i) => `
        <tr>
            <td class="p-0 text-center text-[#333]" style="background:${c}">${i + 1}</td>
            <td class="p-0 border border-[#999]">
                <div class="relative">
                    <select aria-label="正反面 ${i + 1}" class="appearance-none block w-full h-[13px] pl-[2px] bg-white"><option>正</option><option>反</option></select>
                    <svg class="absolute right-[2px] top-[4px] w-[5px] h-[5px]" viewBox="0 0 8 8" fill="none" stroke="#182026" stroke-width="2"><path d="M1 2l3 3 3-3"/></svg>
                </div>
            </td>
            <td class="p-0 bg-[#e4eaee]"><input aria-label="偏移 ${i + 1}" disabled value="0" class="block w-full h-[13px] pl-1 text-[7px] text-[#a7b6c2]"></td>
            <td class="p-0 border border-[#d3d8dc]"><input aria-label="深度 ${i + 1}" value="${i ? 0 : 15}" class="block w-full h-[13px] pl-1 text-[7px] text-[#394b59]"></td>
            <td class="p-0 border border-[#d3d8dc]"><input aria-label="造型类型 ${i + 1}" class="block w-full h-[13px]"></td>
            <td class="p-0 border border-[#d3d8dc]"><input aria-label="刀具 ${i + 1}" value="${i ? '双击选刀' : '45度V刀,右'}" class="block w-full h-[13px] px-1 text-[7px] text-[#394b59]"></td>
            <td class="p-0"><button aria-label="添加" class="flex ml-px"><svg class="w-[9px] h-[9px]" viewBox="0 0 16 16" fill="none" stroke="#0f8050" stroke-width="2"><circle cx="8" cy="8" r="7"/><path d="M8 4v8M4 8h8"/></svg></button></td>
        </tr>`).join('');

    // Status toggles, a leading "+" means switched on
    function toggle(item) {
        const on = item[0] === '+';
        const name = item.replace('+', '');
        return `<label class="flex items-center gap-[5px] border-l border-[#b4c0c9] pl-[5px]">${name}
            <input type="checkbox" ${on ? 'checked' : ''} class="appearance-none w-[15px] h-[9px] rounded-full bg-[#bfccd6] checked:bg-[#137cbd] before:content-[''] before:block before:w-[7px] before:h-[7px] before:m-px before:rounded-full before:bg-white checked:before:ml-[7px]"></label>`;
    }
    const divider = '<span class="h-2 border-l border-[#b4c0c9]"></span>';
    document.getElementById('statusA').innerHTML = ['灯光光照', '灯光阴影', '天空球', '+显示板件间尺寸', '切换布局', '+排钻反应器'].map(toggle).join('') + divider;
    document.getElementById('statusB').innerHTML = ['正交(F8)', '+亮显', '+动态捕捉(F3)', '+工具栏', '+动态输入'].map(toggle).join('');
    document.getElementById('statusC').innerHTML = ['隐藏参数标注', '+选择编组', '捕捉穿透', '智能UCS'].map(toggle).join('') + divider;
</script>
</body>
</html>
